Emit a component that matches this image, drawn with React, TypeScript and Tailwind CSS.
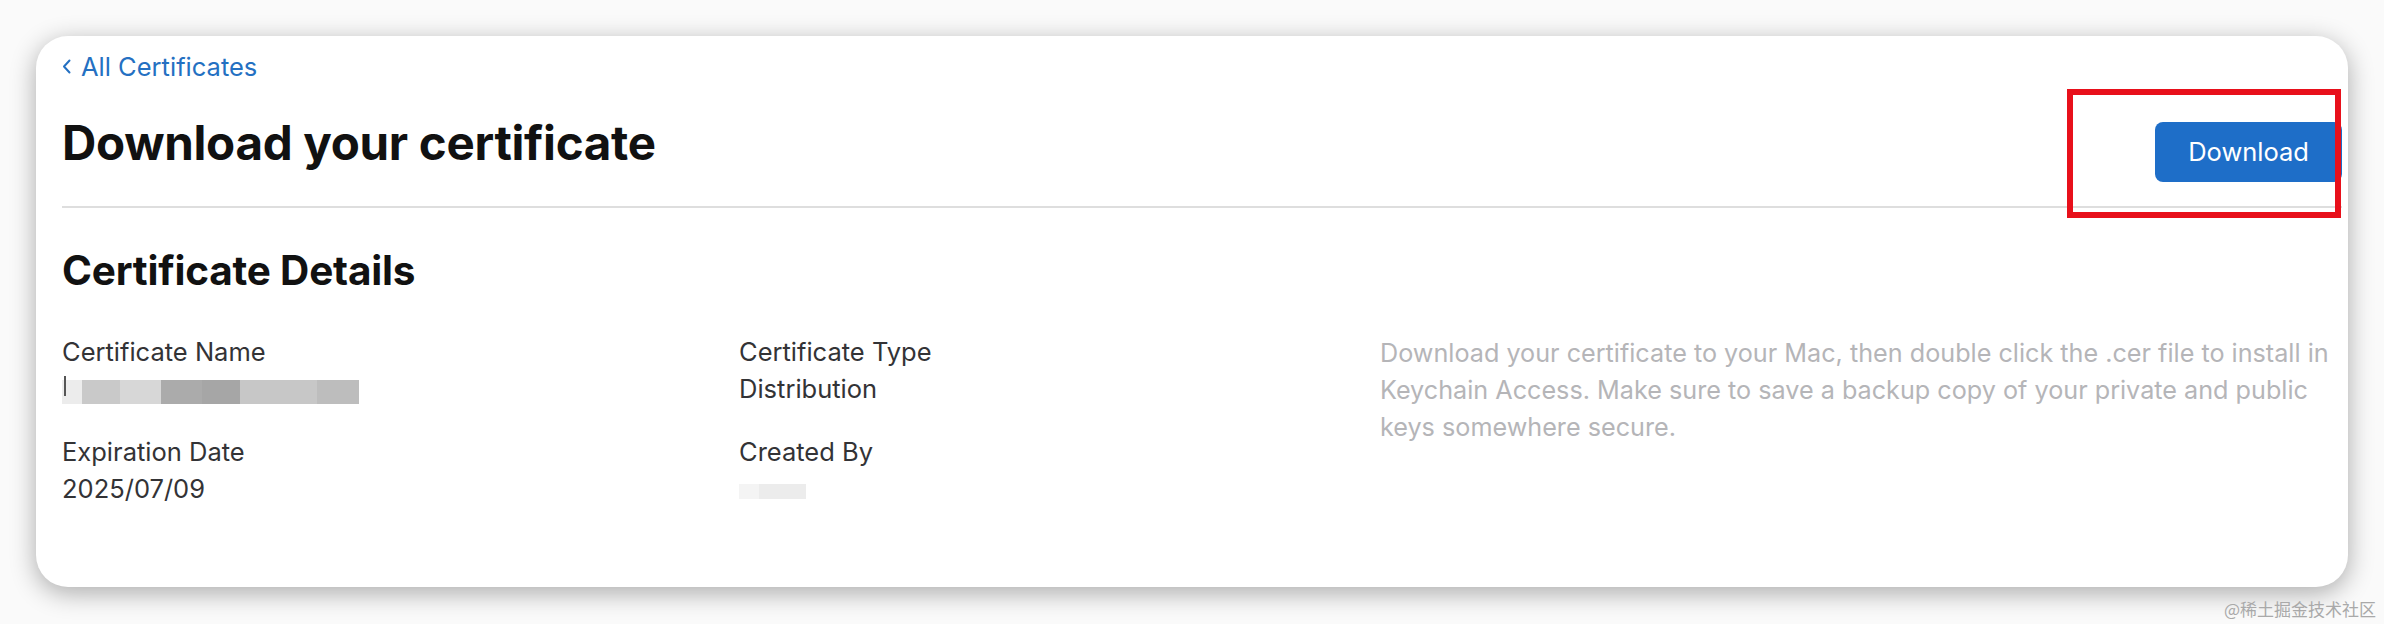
import React from "react";

function Chevron() {
  return (
    <svg width="10" height="15" viewBox="0 0 10 15" className="mr-[9px] shrink-0" aria-hidden="true">
      <path d="M7.5 1.5 L2 7.5 L7.5 13.5" fill="none" stroke="#2470c2" strokeWidth="2" strokeLinecap="round" strokeLinejoin="round" />
    </svg>
  );
}

function Field({ label, children }: { label: string; children: React.ReactNode }) {
  return (
    <div className="flex flex-col">
      <div className="h-[37px] leading-[37px] text-[#333336]">{label}</div>
      <div className="h-[38px] leading-[38px] text-[#333336] flex items-center">{children}</div>
    </div>
  );
}

function BlurredName() {
  const blocks = [
    { w: 20, c: "#ececec" },
    { w: 38, c: "#c9c9c9" },
    { w: 41, c: "#d7d7d7" },
    { w: 41, c: "#ababab" },
    { w: 38, c: "#a6a6a6" },
    { w: 77, c: "#c7c7c7" },
    { w: 42, c: "#bdbdbd" },
  ];
  return (
    <div className="relative h-[24px] mt-[6px] flex">
      {blocks.map((b, i) => (
        <div key={i} className="h-full" style={{ width: b.w, background: b.c }} />
      ))}
      <div className="absolute left-[2px] -top-[4px] w-[2px] h-[20px] bg-[#555]" />
    </div>
  );
}

export default function App() {
  return (
    <div className="relative w-[2384px] h-[624px] overflow-hidden bg-[#fafafa] pt-[36px] pl-[36px] font-['Inter','Noto_Sans',sans-serif]">
      <div className="relative w-[2312px] h-[551px] rounded-[32px] bg-white shadow-[0_6px_26px_rgba(0,0,0,0.32)] overflow-hidden pl-[26px] pr-[6px] pt-[12px] text-[25.5px]">
        <a className="flex items-center h-[37px] leading-[37px] text-[#2470c2]">
          <Chevron />
          <span>All Certificates</span>
        </a>

        <div className="flex justify-between items-start pt-[34px] pb-[24px] border-b-2 border-[#dedede]">
          <h1 className="text-[47.5px] leading-[47px] font-bold text-[#111] tracking-[-0.3px]">Download your certificate</h1>
          <button className="mt-[3px] h-[60px] px-[33px] rounded-[8px] bg-[#1e6ec8] text-white text-[25.5px] leading-[60px]">
            Download
          </button>
        </div>

        <h2 className="mt-[43px] text-[40.5px] leading-[40px] font-bold text-[#111] tracking-[-0.2px]">Certificate Details</h2>

        <div className="mt-[42px] grid grid-cols-[677px_641px_1fr]">
          <div className="flex flex-col gap-[25px]">
            <Field label="Certificate Name">
              <BlurredName />
            </Field>
            <Field label="Expiration Date">
              <span>2025/07/09</span>
            </Field>
          </div>
          <div className="flex flex-col gap-[25px]">
            <Field label="Certificate Type">
              <span>Distribution</span>
            </Field>
            <Field label="Created By">
              <div className="flex h-[15px] mt-[4px]">
                <div className="w-[20px] h-full bg-[#f4f4f4]" />
                <div className="w-[47px] h-full bg-[#ececec]" />
              </div>
            </Field>
          </div>
          <p className="mt-[2px] leading-[37px] text-[#b5b5b8] whitespace-nowrap text-[25.2px]">
            Download your certificate to your Mac, then double click the .cer file to install in
            <br />
            Keychain Access. Make sure to save a backup copy of your private and public
            <br />
            keys somewhere secure.
          </p>
        </div>

        <div className="absolute left-[2031px] top-[53px] w-[274px] h-[129px] border-[6px] border-[#e8101b]" />
      </div>

      <div className="absolute right-[8px] bottom-[4px] text-[17px] leading-[22px] text-[#a9a9a9] font-['Noto_Sans_CJK_SC',sans-serif]">
        @稀土掘金技术社区
      </div>
    </div>
  );
}
